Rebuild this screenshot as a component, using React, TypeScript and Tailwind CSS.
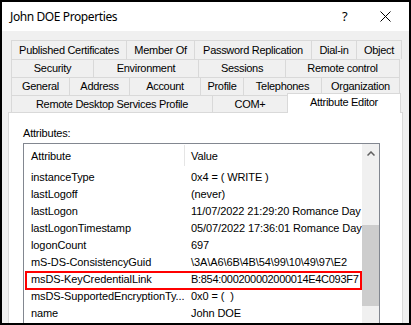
import React from "react";

const F = { fontFamily: '"Liberation Sans", Arial, sans-serif' };

type Cell = { t: string; w: number };

const row1: Cell[] = [
  { t: "Published Certificates", w: 115 },
  { t: "Member Of", w: 68 },
  { t: "Password Replication", w: 117 },
  { t: "Dial-in", w: 45 },
  { t: "Object", w: 46 },
];
const row2: Cell[] = [
  { t: "Security", w: 82 },
  { t: "Environment", w: 105 },
  { t: "Sessions", w: 87 },
  { t: "Remote control", w: 115 },
];
const row3: Cell[] = [
  { t: "General", w: 58 },
  { t: "Address", w: 60 },
  { t: "Account", w: 71 },
  { t: "Profile", w: 43 },
  { t: "Telephones", w: 78 },
  { t: "Organization", w: 79 },
];

function TabRow({ cells, h }: { cells: Cell[]; h: number }) {
  return (
    <div className="flex" style={{ height: h }}>
      {cells.map((c, i) => (
        <div
          key={c.t}
          className={`flex items-center justify-center border-t border-l border-[#d9d9d9] text-[11px] tracking-[-0.3px] text-black whitespace-nowrap ${
            i === cells.length - 1 ? "border-r" : ""
          }`}
          style={{ width: c.w, ...F }}
        >
          {c.t}
        </div>
      ))}
    </div>
  );
}

const rows: [string, string][] = [
  ["instanceType", "0x4 = ( WRITE )"],
  ["lastLogoff", "(never)"],
  ["lastLogon", "11/07/2022 21:29:20 Romance Day"],
  ["lastLogonTimestamp", "05/07/2022 17:36:01 Romance Day"],
  ["logonCount", "697"],
  ["mS-DS-ConsistencyGuid", "\\3A\\A6\\6B\\4B\\54\\99\\10\\49\\97\\E2"],
  ["msDS-KeyCredentialLink", "B:854:000200002000014E4C093F7"],
  ["msDS-SupportedEncryptionTy...", "0x0 = (\u00a0\u00a0)"],
  ["name", "John DOE"],
];

export default function App() {
  return (
    <div className="w-[411px] h-[325px] border-2 border-black bg-[#f0f0f0] flex flex-col overflow-hidden">
      {/* Title bar */}
      <div className="h-[29px] bg-white flex items-center shrink-0 relative">
        <span
          className="pl-[8px] text-[12px] tracking-[-0.4px] text-black"
          style={{ fontFamily: '"Noto Sans", "Open Sans", sans-serif' }}
        >
          John DOE Properties
        </span>
        <span
          className="absolute left-[340px] top-[5px] text-[13px] text-black"
          style={{ fontFamily: '"Noto Sans", sans-serif' }}
        >
          ?
        </span>
        <svg className="absolute left-[378px] top-[9px]" width="11" height="11" viewBox="0 0 11 11">
          <path d="M0.5 0.5 L10.5 10.5 M10.5 0.5 L0.5 10.5" stroke="#000" strokeWidth="1" fill="none" />
        </svg>
      </div>

      {/* Body */}
      <div className="flex-1 flex flex-col pt-[9px]">
        <div className="pl-[9px] flex flex-col">
          <TabRow cells={row1} h={19} />
          <TabRow cells={row2} h={18} />
          <TabRow cells={row3} h={18} />
          <div className="flex h-[17px]">
            <div
              className="w-[201px] flex items-center justify-center border-t border-l border-[#d9d9d9] text-[11px] tracking-[-0.3px] whitespace-nowrap"
              style={F}
            >
              Remote Desktop Services Profile
            </div>
            <div
              className="w-[75px] flex items-center justify-center border-t border-l border-[#d9d9d9] text-[11px] tracking-[-0.3px]"
              style={F}
            >
              COM+
            </div>
            <div
              className="relative z-10 -top-[2px] w-[114px] h-[20px] bg-white border-t border-l border-r border-[#d9d9d9] flex justify-center pt-[1px] text-[11px] leading-[15px] tracking-[-0.3px] whitespace-nowrap"
              style={F}
            >
              Attribute Editor
            </div>
          </div>
        </div>

        {/* Panel */}
        <div className="ml-[6px] w-[395px] flex-1 bg-white border border-[#d9d9d9] border-b-0 flex flex-col">
          <div className="pl-[14px] pt-[12px] h-[30px] text-[11px] tracking-[-0.2px] text-black" style={F}>
            Attributes:
          </div>
          <div className="ml-[14px] w-[357px] flex-1 border border-[#828790] border-b-0 flex">
            <div className="w-[338px] flex flex-col">
              <div className="h-[25px] flex items-center text-[11px] tracking-[-0.1px] text-black shrink-0" style={F}>
                <div className="w-[160px] pl-[7px]">Attribute</div>
                <div className="w-px h-[21px] bg-[#e5e5e5] -mt-[2px]" />
                <div className="pl-[6px]">Value</div>
              </div>
              {rows.map(([a, v], i) => (
                <div key={a} className="relative h-[17px] flex items-center text-[11px] tracking-[-0.1px] text-black shrink-0" style={F}>
                  <div className="w-[160px] pl-[7px] whitespace-nowrap overflow-hidden">{a}</div>
                  <div
                    className={`w-[178px] pl-[7px] whitespace-nowrap overflow-hidden ${
                      i === 6 ? "tracking-[-0.3px]" : ""
                    }`}
                  >
                    {v}
                  </div>
                  {i === 6 && (
                    <div className="absolute left-px right-0 top-0 -bottom-[2px] border-2 border-[#ff0000]" />
                  )}
                </div>
              ))}
            </div>
            <div className="w-[17px] bg-[#f0f0f0] flex flex-col items-center">
              <div className="h-[17px] w-full flex items-center justify-center pt-[2px]">
                <svg width="8" height="5" viewBox="0 0 8 5">
                  <path d="M0.5 4.5 L4 1 L7.5 4.5" stroke="#606060" strokeWidth="1.5" fill="none" />
                </svg>
              </div>
              <div className="mt-[64px] w-full h-[81px] bg-[#cdcdcd]" />
            </div>
          </div>
        </div>
      </div>
    </div>
  );
}
